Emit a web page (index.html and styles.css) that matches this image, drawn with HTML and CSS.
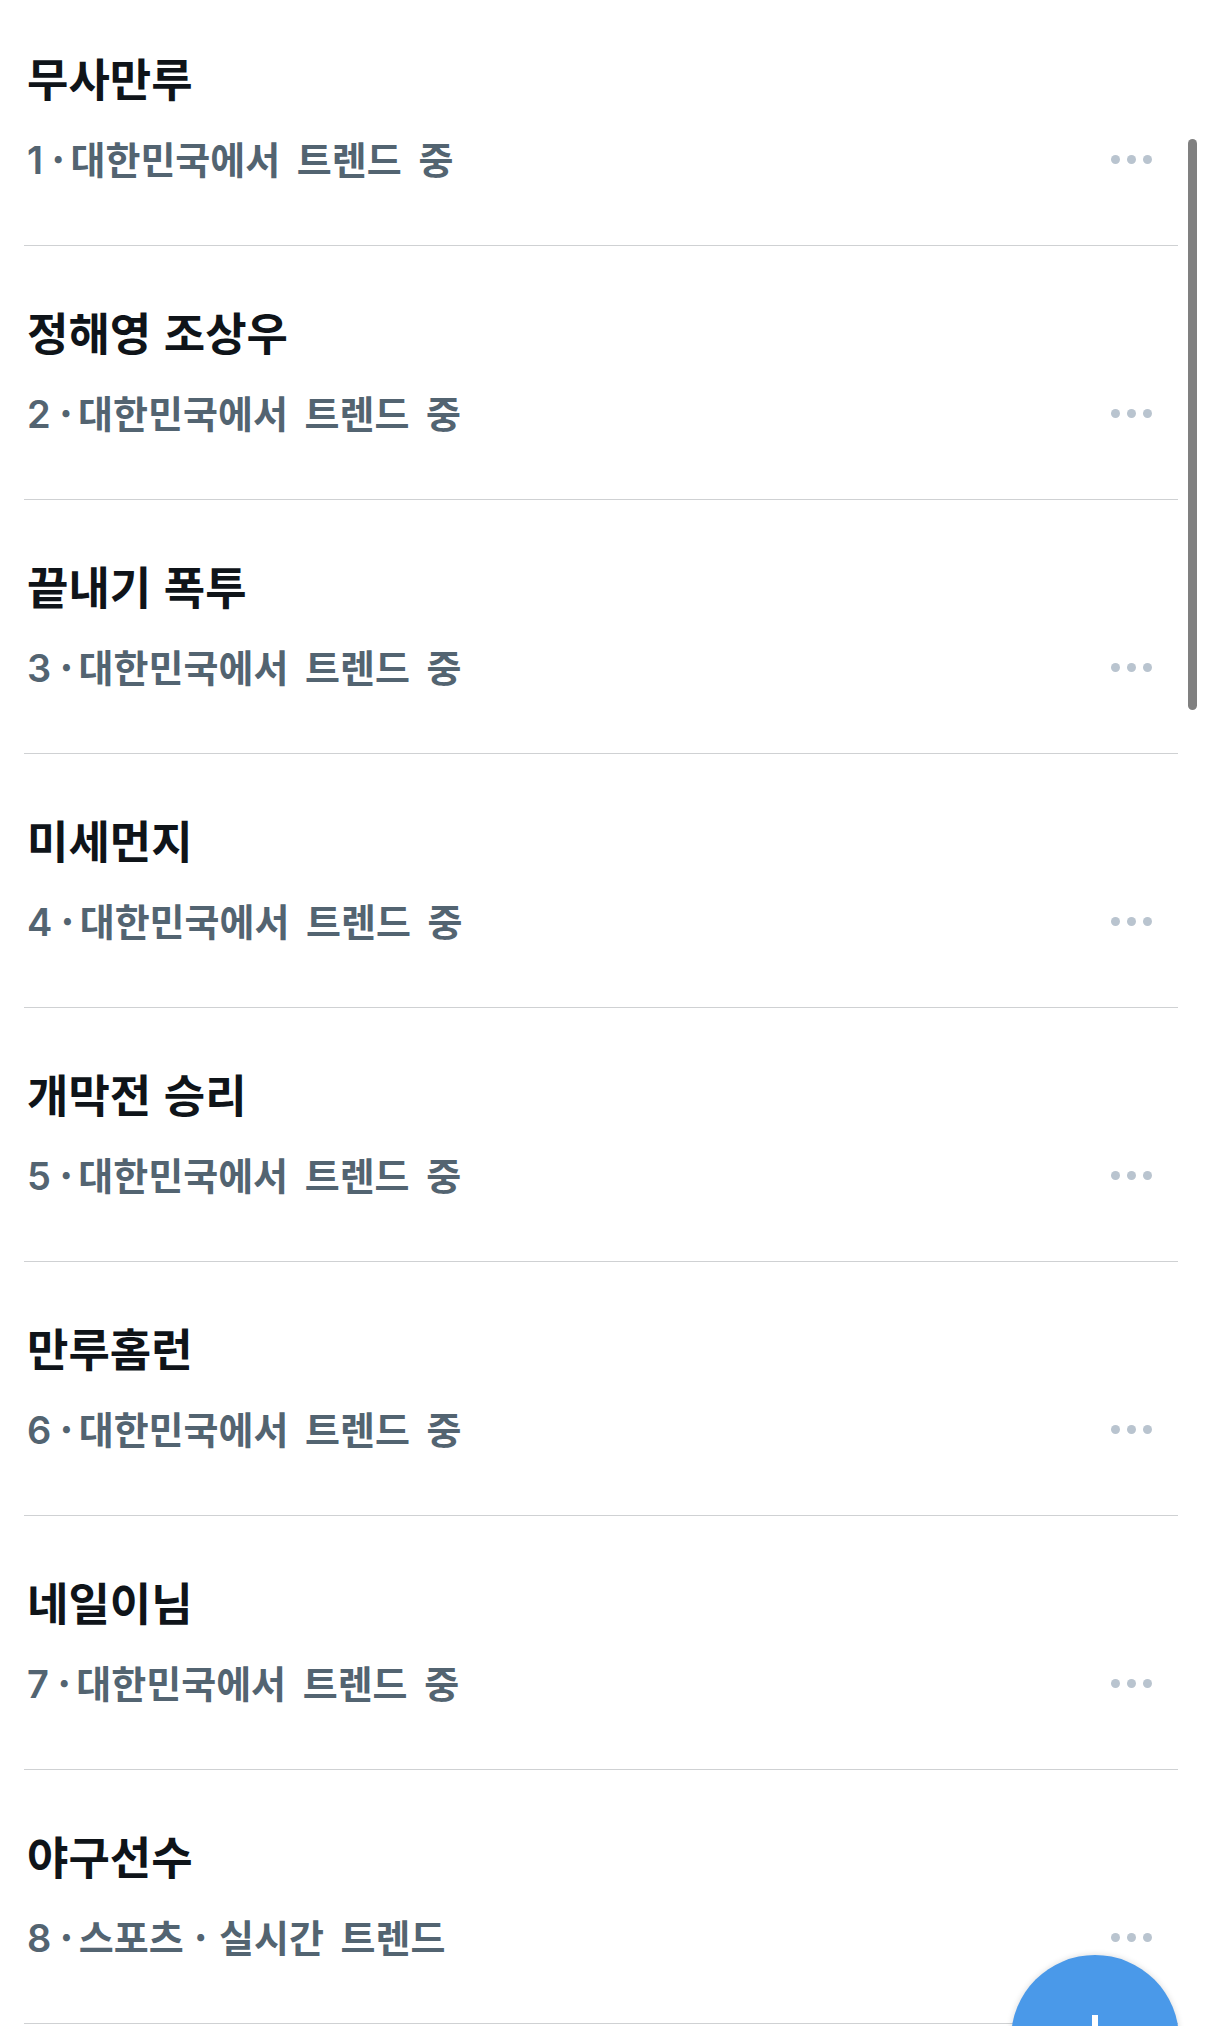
FILE: index.html
```html
<!DOCTYPE html>
<html lang="ko">
<head>
<meta charset="utf-8">
<title>트렌드</title>
<link rel="stylesheet" href="styles.css">
</head>
<body>
<main class="list">
  <div class="row">
    <div class="title">무사만루</div>
    <div class="meta"><span class="sub"><span class="num">1</span><span class="sep">·</span>대한민국에서 트렌드 중</span><span class="more"><i></i><i></i><i></i></span></div>
  </div>
  <div class="row">
    <div class="title">정해영 조상우</div>
    <div class="meta"><span class="sub"><span class="num">2</span><span class="sep">·</span>대한민국에서 트렌드 중</span><span class="more"><i></i><i></i><i></i></span></div>
  </div>
  <div class="row">
    <div class="title">끝내기 폭투</div>
    <div class="meta"><span class="sub"><span class="num">3</span><span class="sep">·</span>대한민국에서 트렌드 중</span><span class="more"><i></i><i></i><i></i></span></div>
  </div>
  <div class="row">
    <div class="title">미세먼지</div>
    <div class="meta"><span class="sub"><span class="num">4</span><span class="sep">·</span>대한민국에서 트렌드 중</span><span class="more"><i></i><i></i><i></i></span></div>
  </div>
  <div class="row">
    <div class="title">개막전 승리</div>
    <div class="meta"><span class="sub"><span class="num">5</span><span class="sep">·</span>대한민국에서 트렌드 중</span><span class="more"><i></i><i></i><i></i></span></div>
  </div>
  <div class="row">
    <div class="title">만루홈런</div>
    <div class="meta"><span class="sub"><span class="num">6</span><span class="sep">·</span>대한민국에서 트렌드 중</span><span class="more"><i></i><i></i><i></i></span></div>
  </div>
  <div class="row">
    <div class="title">네일이님</div>
    <div class="meta"><span class="sub"><span class="num">7</span><span class="sep">·</span>대한민국에서 트렌드 중</span><span class="more"><i></i><i></i><i></i></span></div>
  </div>
  <div class="row">
    <div class="title">야구선수</div>
    <div class="meta"><span class="sub"><span class="num">8</span><span class="sep">·</span>스포츠<span class="sep wide">·</span>실시간 트렌드</span><span class="more"><i></i><i></i><i></i></span></div>
  </div>
</main>
<div class="scrollbar"></div>
<button class="fab" aria-label="새 게시물"><span class="plus"></span></button>
</body>
</html>
```
FILE: styles.css
```css
html, body {
  margin: 0;
  padding: 0;
  background: #ffffff;
  overflow: hidden;
}
body {
  font-family: "Noto Sans CJK KR", "Noto Sans", sans-serif;
  width: 1206px;
  height: 2026px;
}
.list {
  margin-top: -8px;
  padding-left: 24px;
  padding-right: 28px;
}
.row {
  height: 253px;
  border-bottom: 1px solid #cfd1d3;
  display: flex;
  flex-direction: column;
}
.title {
  margin-top: 62px;
  padding-left: 3px;
  font-size: 45px;
  line-height: 48px;
  font-weight: 700;
  color: #0f1419;
  word-spacing: 0;
}
.meta {
  margin-top: 34px;
  padding-left: 3px;
  display: flex;
  align-items: center;
  justify-content: space-between;
}
.sub {
  font-size: 38px;
  line-height: 44px;
  font-weight: 700;
  color: #536471;
  word-spacing: 6px;
}
.num {
  font-family: "Inter", "Noto Sans", sans-serif;
  font-weight: 600;
}
.sep {
  margin: 0 6px 0 9px;
}
.sep.wide {
  margin: 0 12px 0 11px;
}
.more {
  display: flex;
  gap: 7px;
  margin-right: 26px;
}
.more i {
  width: 9px;
  height: 9px;
  border-radius: 50%;
  background: #b9c4cf;
}
.scrollbar {
  position: fixed;
  left: 1188px;
  top: 139px;
  width: 9px;
  height: 571px;
  border-radius: 5px;
  background: #808080;
}
.fab {
  position: fixed;
  left: 1011px;
  top: 1955px;
  width: 168px;
  height: 168px;
  border: none;
  border-radius: 50%;
  background: #4a99e9;
  box-shadow: 0 0 6px rgba(0, 0, 0, 0.15);
  padding: 0;
}
.plus {
  position: absolute;
  left: 60px;
  top: 60px;
  width: 48px;
  height: 48px;
}
.plus::before, .plus::after {
  content: "";
  position: absolute;
  background: #ffffff;
}
.plus::before {
  left: 21px;
  top: 0;
  width: 6px;
  height: 48px;
}
.plus::after {
  top: 21px;
  left: 0;
  height: 6px;
  width: 48px;
}
```
